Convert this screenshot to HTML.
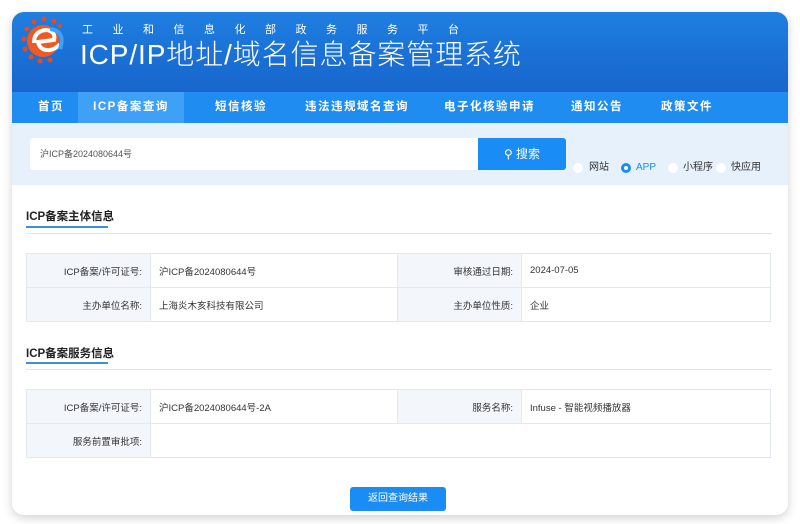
<!DOCTYPE html>
<html><head><meta charset="utf-8"><style>
*{margin:0;padding:0;box-sizing:border-box}
body{width:800px;height:524px;background:#fff;font-family:"Liberation Sans","Noto Sans CJK SC",sans-serif;position:relative;overflow:hidden}
.card{position:absolute;left:12px;top:12px;width:776px;height:503px;border-radius:12px;background:#fff;box-shadow:0 3px 10px rgba(0,0,0,.18);overflow:hidden}
.hdr{position:absolute;left:0;top:0;width:776px;height:80px;background:linear-gradient(180deg,#1f7fe0,#1a6fd4 60%,#1766cc)}
.sub{position:absolute;left:70px;top:9px;color:#fff;font-size:11px}
.sub span{display:inline-block;width:30.5px}
.ttl{position:absolute;left:68px;top:21px;color:#fff;font-size:28px;letter-spacing:0.9px;font-weight:300;white-space:nowrap}
.nav{position:absolute;left:0;top:80px;width:776px;height:31px;background:#1e8cf0}
.nav div{position:absolute;top:0;height:31px;line-height:31px;color:#fff;font-size:11.5px;font-weight:bold;letter-spacing:1.5px}
.srch{position:absolute;left:0;top:111px;width:776px;height:62px;background:#e6f1fc}
.inp{position:absolute;left:18px;top:15px;width:448px;height:32px;background:#fff;border-radius:3px 0 0 3px;font-size:9px;color:#555;line-height:32px;padding-left:10px}
.btn{position:absolute;left:466px;top:15px;width:88px;height:32px;background:#1a8cf5;color:#fff;font-size:12px;line-height:32px;text-align:center;border-radius:0 3px 3px 0}
.rad{position:absolute;top:39px;font-size:10px;color:#333;line-height:12px}
.dot{position:absolute;top:40px;width:10px;height:10px;border-radius:50%;background:#fff}
.sec{position:absolute;left:14px;font-size:11.5px;font-weight:bold;color:#222}
.ul{position:absolute;left:14px;width:82px;height:2px;background:#3d8fd6}
.ln{position:absolute;left:14px;width:746px;height:1px;background:#dde6ee}
table{position:absolute;left:14px;width:745px;border-collapse:collapse;font-size:9.5px;color:#333}
td{border:1px solid #e3e8ee;height:34px;padding:0 8px;vertical-align:middle}
td.l{background:#f3f7fc;text-align:right;width:124px}
.back{position:absolute;left:338px;top:475px;width:96px;height:24px;background:#1a8cf5;color:#fff;font-size:10px;line-height:24px;text-align:center;border-radius:3px}
</style></head><body>
<div class="card">
<div class="hdr">
<svg style="position:absolute;left:8px;top:3px" width="48" height="50" viewBox="0 0 48 50">
<g fill="#e84a1f"><circle cx="24" cy="4" r="2.5"/><circle cx="34" cy="6" r="2.5"/><circle cx="14" cy="7" r="2.5"/><circle cx="7" cy="14" r="2.5"/><circle cx="4" cy="24" r="2.5"/><circle cx="5" cy="34" r="2.5"/><circle cx="11" cy="42" r="2.5"/><circle cx="20" cy="46" r="2.5"/><circle cx="30" cy="45" r="2.5"/><circle cx="40" cy="11" r="2"/></g>
<circle cx="23" cy="26" r="16" fill="#ef5a22"/>
<path d="M14 28 Q14 16 26 15 Q36 16 34 25 L18 27 Q20 36 30 35 Q36 34 40 29" fill="none" stroke="#fff" stroke-width="4"/>
<path d="M30 14 Q46 16 40 34" fill="none" stroke="#3fa0ff" stroke-width="4"/>
</svg>
<div class="sub"><span>工</span><span>业</span><span>和</span><span>信</span><span>息</span><span>化</span><span>部</span><span>政</span><span>务</span><span>服</span><span>务</span><span>平</span><span>台</span></div>
<div class="ttl">ICP/IP地址/域名信息备案管理系统</div>
</div>
<div class="nav">
<div style="left:26px">首页</div>
<div style="left:66px;width:106px;background:#3ea0f6;text-align:center">ICP备案查询</div>
<div style="left:203px">短信核验</div>
<div style="left:293px">违法违规域名查询</div>
<div style="left:432px">电子化核验申请</div>
<div style="left:559px">通知公告</div>
<div style="left:649px">政策文件</div>
</div>
<div class="srch">
<div class="inp">沪ICP备2024080644号</div>
<div class="btn">&#9906; 搜索</div>
<div class="dot" style="left:561px"></div><div class="rad" style="left:577px">网站</div>
<div class="dot" style="left:609px;border:3px solid #1a8cf5;background:#fff"></div><div class="rad" style="left:624px;color:#1a8cf5">APP</div>
<div class="dot" style="left:656px"></div><div class="rad" style="left:671px">小程序</div>
<div class="dot" style="left:704px"></div><div class="rad" style="left:719px">快应用</div>
</div>
<div class="sec" style="top:196px">ICP备案主体信息</div>
<div class="ul" style="top:214px"></div>
<div class="ln" style="top:221px"></div>
<table style="top:241px">
<tr><td class="l">ICP备案/许可证号:</td><td style="width:247px">沪ICP备2024080644号</td><td class="l">审核通过日期:</td><td>2024-07-05</td></tr>
<tr><td class="l">主办单位名称:</td><td>上海炎木亥科技有限公司</td><td class="l">主办单位性质:</td><td>企业</td></tr>
</table>
<div class="sec" style="top:333px">ICP备案服务信息</div>
<div class="ul" style="top:350px"></div>
<div class="ln" style="top:357px"></div>
<table style="top:377px">
<tr><td class="l">ICP备案/许可证号:</td><td style="width:247px">沪ICP备2024080644号-2A</td><td class="l">服务名称:</td><td>Infuse - 智能视频播放器</td></tr>
<tr><td class="l">服务前置审批项:</td><td colspan="3"></td></tr>
</table>
<div class="back">返回查询结果</div>
</div>
</body></html>
